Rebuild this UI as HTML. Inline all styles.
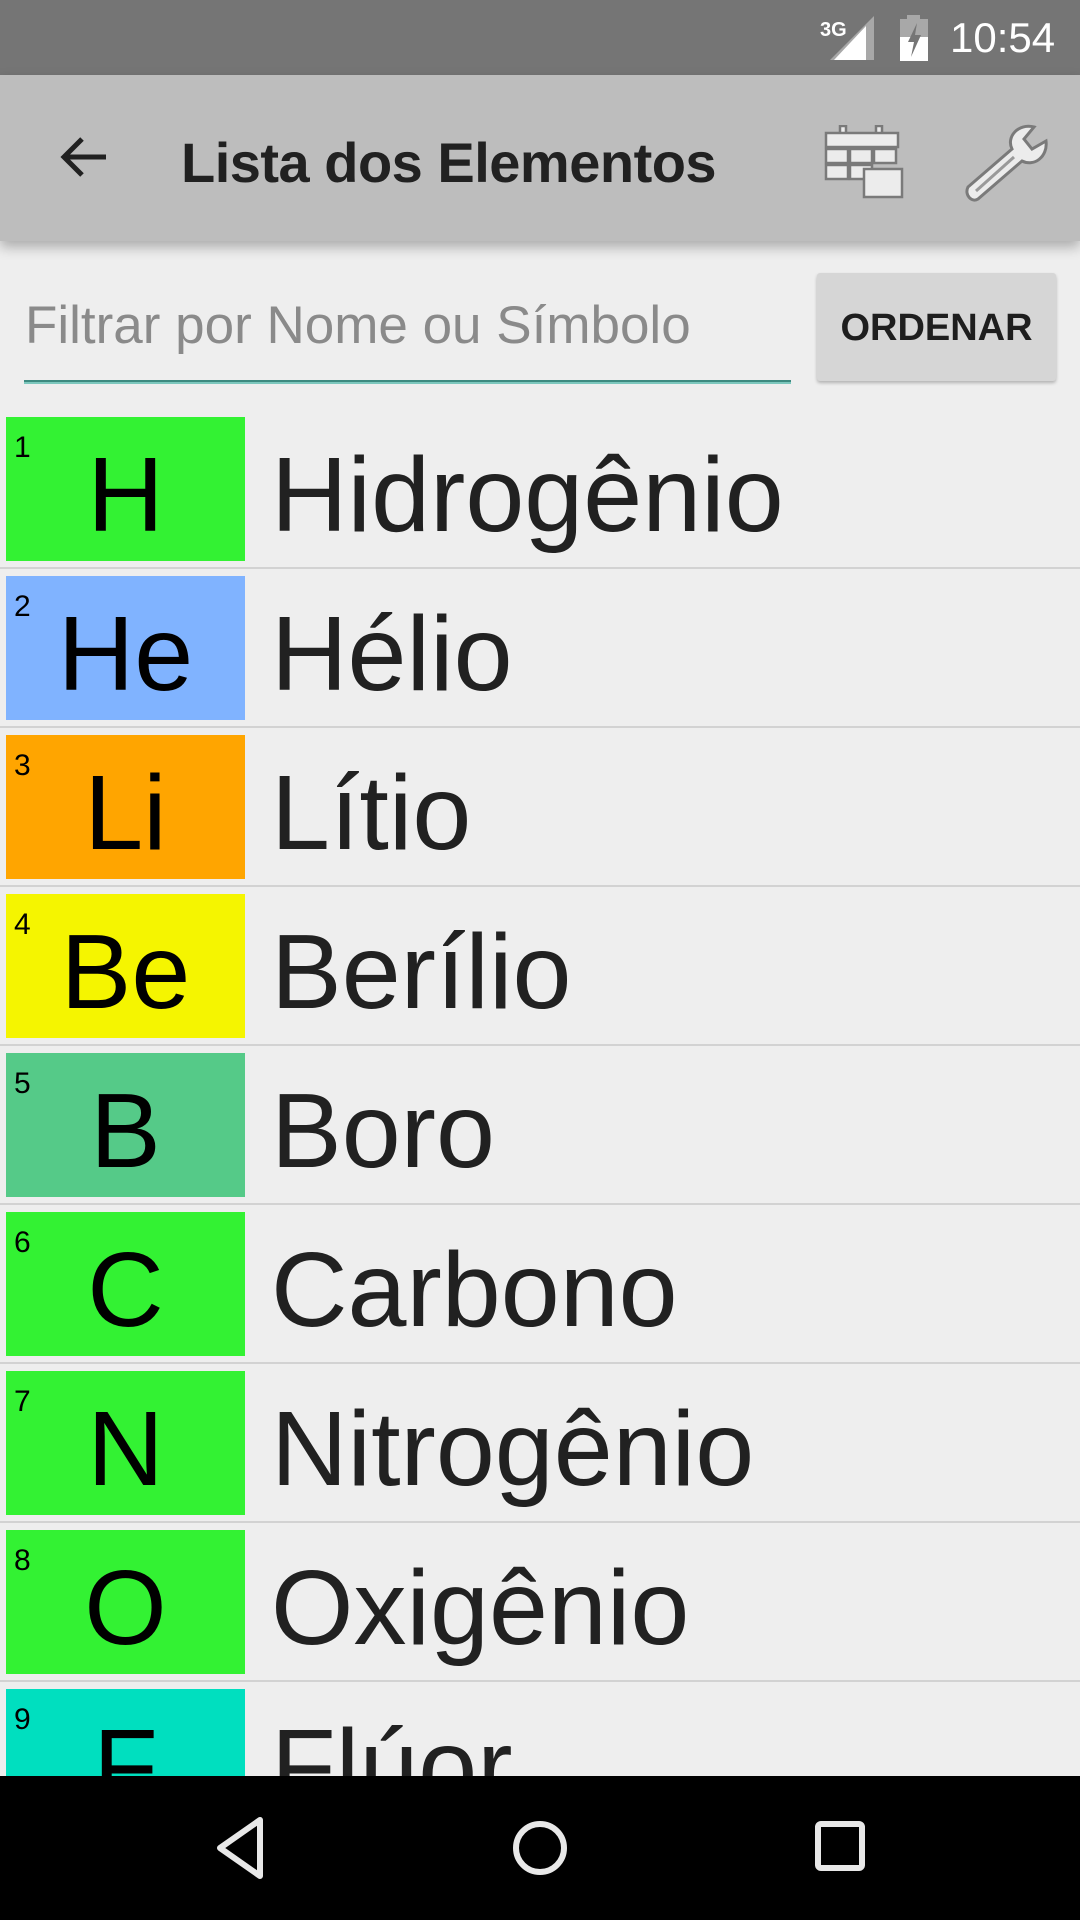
<!DOCTYPE html>
<html><head><meta charset="utf-8"><style>
*{margin:0;padding:0;box-sizing:border-box}
body{width:1080px;height:1920px;overflow:hidden;background:#eeeeee;font-family:"Liberation Sans",Roboto,sans-serif;position:relative}
.status{position:absolute;left:0;top:0;width:1080px;height:75px;background:#757575}
.appbar{position:absolute;left:0;top:75px;width:1080px;height:166px;background:#bdbdbd;box-shadow:0 6px 12px rgba(0,0,0,.28);z-index:2}
.title{position:absolute;left:181px;top:55px;font-size:56px;font-weight:bold;color:#212121;letter-spacing:-0.5px}
.filter{position:absolute;left:25px;top:295px;font-size:53px;color:#8a8a8a}
.uline{position:absolute;left:24px;top:380px;width:767px;height:2px;background:#3d8a80}
.uline2{position:absolute;left:24px;top:382px;width:767px;height:2px;background:#7cc7bd}
.btn{position:absolute;left:817px;top:273px;width:239px;height:108px;background:#d6d6d6;border-radius:3px;box-shadow:0 2px 3px rgba(0,0,0,.25);font-size:38px;font-weight:bold;color:#1e1e1e;text-align:center;line-height:110px}
.row{position:absolute;left:0;width:1080px;height:159px}
.tile{position:absolute;left:6px;top:0;width:239px;height:144px}
.num{position:absolute;left:8px;top:14px;font-size:30px;color:#000}
.sym{position:absolute;left:0;width:239px;text-align:center;top:18px;font-size:106px;color:#000;line-height:120px}
.name{position:absolute;left:271px;top:18px;font-size:106px;color:#212121;line-height:120px}
.sep{position:absolute;left:0;top:150px;width:1080px;height:2px;background:#d2d2d2}
.nav{position:absolute;left:0;top:1776px;width:1080px;height:144px;background:#000;z-index:3}
</style></head><body>
<div class="status">
<svg style="position:absolute;left:818px;top:14px" width="60" height="48" viewBox="0 0 60 48">
<text x="2" y="22" font-size="20" font-weight="bold" fill="#fff" font-family="Liberation Sans Narrow,Liberation Sans,sans-serif">3G</text>
<polygon points="56,2 56,46 12,46" fill="#a8a8a8"/><polygon points="48,12 48,46 16,46" fill="#fff"/></svg>
<svg style="position:absolute;left:899px;top:15px" width="30" height="46" viewBox="0 0 30 46">
<rect x="8" y="0" width="13" height="5" fill="#a8a8a8"/><rect x="1" y="4" width="28" height="42" fill="#a8a8a8"/><rect x="1" y="22" width="28" height="24" fill="#fff"/>
<polygon points="18,8 9,27 15,27 12,42 22,20 16,20" fill="#757575"/></svg>
<div style="position:absolute;left:950px;top:14px;font-size:42px;color:#fff">10:54</div>
</div>
<div class="appbar">
<svg style="position:absolute;left:58px;top:56px" width="52" height="52" viewBox="0 0 52 52"><path d="M48 26H8M24 8L6 26l18 18" stroke="#212121" stroke-width="5" fill="none"/></svg>
<div class="title">Lista dos Elementos</div>
<svg style="position:absolute;left:824px;top:50px" width="82" height="76" viewBox="0 0 82 76" fill="#ececec" stroke="#7a7a7a" stroke-width="2.5">
<rect x="16" y="1" width="6" height="12"/><rect x="52" y="1" width="6" height="12"/>
<rect x="2" y="8" width="72" height="14"/>
<rect x="2" y="24" width="22" height="14"/><rect x="26" y="24" width="22" height="14"/><rect x="50" y="24" width="22" height="14"/>
<rect x="2" y="40" width="22" height="14"/><rect x="26" y="40" width="22" height="14"/>
<rect x="40" y="44" width="38" height="28"/></svg>
<svg style="position:absolute;left:962px;top:48px" width="92" height="80" viewBox="0 0 92 80"><path d="M6 64 L50 26 C44 14 56 0 72 4 L62 16 L70 26 L84 18 C86 34 72 44 60 38 L16 76 C10 80 2 72 6 64Z" fill="#ececec" stroke="#7a7a7a" stroke-width="3"/><path d="M14 68 L52 34" stroke="#9a9a9a" stroke-width="3"/></svg>
</div>
<div class="filter">Filtrar por Nome ou Símbolo</div>
<div class="uline"></div><div class="uline2"></div>
<div class="btn">ORDENAR</div>

<div class="row" style="top:417px"><div class="tile" style="background:#33f233"><div class="num">1</div><div class="sym">H</div></div><div class="name">Hidrogênio</div><div class="sep"></div></div>
<div class="row" style="top:576px"><div class="tile" style="background:#80b3ff"><div class="num">2</div><div class="sym">He</div></div><div class="name">Hélio</div><div class="sep"></div></div>
<div class="row" style="top:735px"><div class="tile" style="background:#ffa500"><div class="num">3</div><div class="sym">Li</div></div><div class="name">Lítio</div><div class="sep"></div></div>
<div class="row" style="top:894px"><div class="tile" style="background:#f5f500"><div class="num">4</div><div class="sym">Be</div></div><div class="name">Berílio</div><div class="sep"></div></div>
<div class="row" style="top:1053px"><div class="tile" style="background:#55ca88"><div class="num">5</div><div class="sym">B</div></div><div class="name">Boro</div><div class="sep"></div></div>
<div class="row" style="top:1212px"><div class="tile" style="background:#33f233"><div class="num">6</div><div class="sym">C</div></div><div class="name">Carbono</div><div class="sep"></div></div>
<div class="row" style="top:1371px"><div class="tile" style="background:#33f233"><div class="num">7</div><div class="sym">N</div></div><div class="name">Nitrogênio</div><div class="sep"></div></div>
<div class="row" style="top:1530px"><div class="tile" style="background:#33f233"><div class="num">8</div><div class="sym">O</div></div><div class="name">Oxigênio</div><div class="sep"></div></div>
<div class="row" style="top:1689px"><div class="tile" style="background:#00dfbf"><div class="num">9</div><div class="sym">F</div></div><div class="name">Flúor</div></div>

<div class="nav">
<svg style="position:absolute;left:210px;top:40px" width="60" height="64" viewBox="0 0 60 64"><path d="M50 4 L50 60 L10 32 Z" fill="none" stroke="#e8e8e8" stroke-width="6" stroke-linejoin="round"/></svg>
<svg style="position:absolute;left:508px;top:40px" width="64" height="64" viewBox="0 0 64 64"><circle cx="32" cy="32" r="24" fill="none" stroke="#e8e8e8" stroke-width="6"/></svg>
<svg style="position:absolute;left:812px;top:42px" width="56" height="56" viewBox="0 0 56 56"><rect x="6" y="6" width="44" height="44" rx="3" fill="none" stroke="#e8e8e8" stroke-width="6"/></svg>
</div>
</body></html>
